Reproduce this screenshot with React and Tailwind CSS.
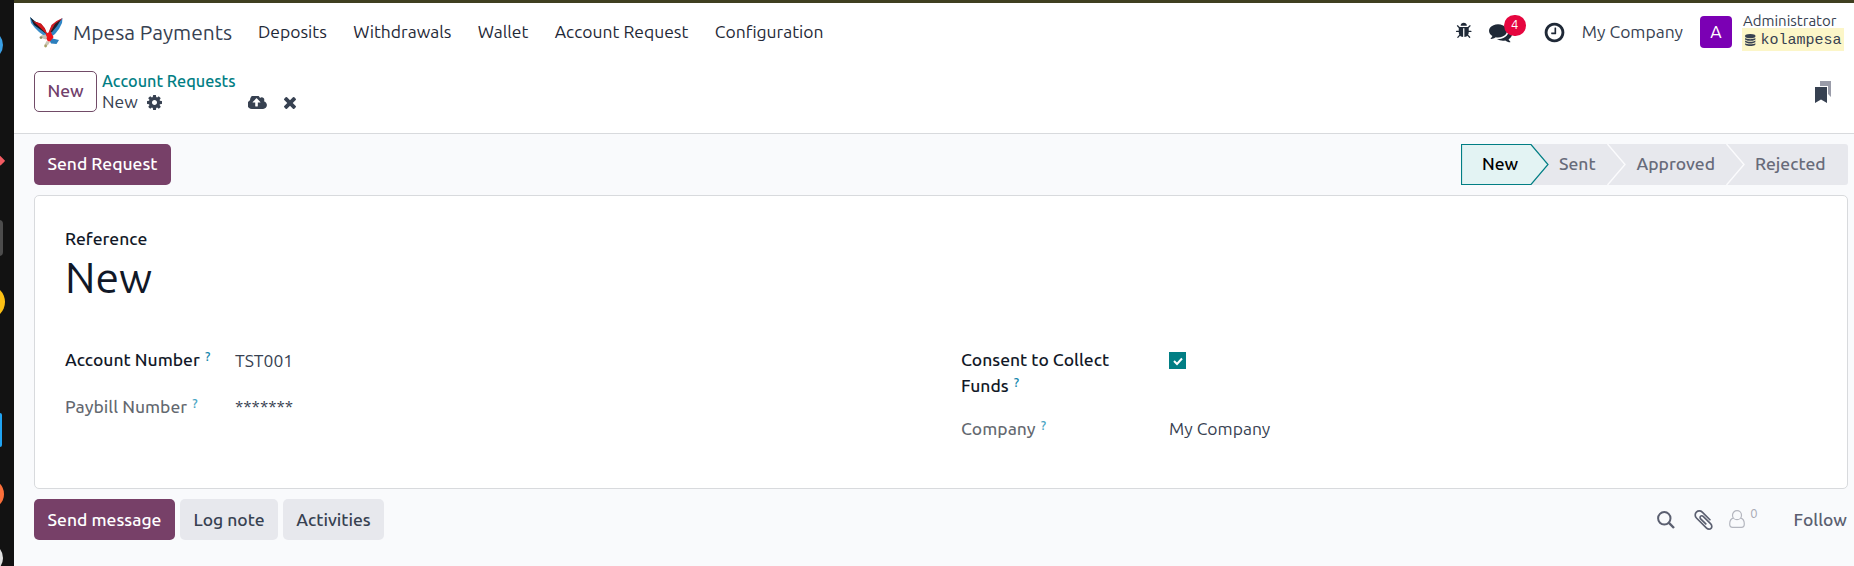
const ICONS = {
  bug: ["0 0 1792 1792", "M1696 960q0 26-19 45t-45 19h-224q0 171-67 290l208 209q19 19 19 45t-19 45q-18 19-45 19t-45-19l-198-197q-5 5-15 13t-42 28.5-65 36.5-82 29-97 13v-896h-128v896q-51 0-101.5-13.5t-87-33-66-39-43.5-32.5l-15-14-183 207q-20 21-48 21-24 0-43-16-19-18-20.5-44.5t15.5-46.5l202-227q-58-114-58-274h-224q-26 0-45-19t-19-45 19-45 45-19h224v-294l-173-173q-19-19-19-45t19-45 45-19 45 19l173 173h844l173-173q19-19 45-19t45 19 19 45-19 45l-173 173v294h224q26 0 45 19t19 45zm-480-576h-640q0-133 93.5-226.5t226.5-93.5 226.5 93.5 93.5 226.5z"],
  comments: ["0 0 1792 1792", "M1408 768q0 139-94 257t-256.5 186.5-353.5 68.5q-86 0-176-16-124 88-278 128-36 9-86 16h-3q-11 0-20.5-8t-11.5-21q-1-3-1-6.5t.5-6.5 2-6l2.5-5 3.5-5.5 4-5 4.5-5 4-4.5q5-6 23-25t26-29.5 22.5-29 25-38.5 20.5-44q-124-72-195-177t-71-224q0-139 94-257t256.5-186.5 353.5-68.5 353.5 68.5 256.5 186.5 94 257zm384 256q0 120-71 224.5t-195 176.5q10 24 20.5 44t25 38.5 22.5 29 26 29.5 23 25q1 1 4 4.5t4.5 5 4 5 3.5 5.5l2.5 5 2 6 .5 6.5-1 6.5q-3 14-13 22t-22 7q-50-7-86-16-154-40-278-128-90 16-176 16-271 0-472-132 58 4 88 4 161 0 309-45t264-129q125-92 192-212t67-254q0-77-23-152 129 71 204 178t75 230z"],
  clock: ["0 0 1792 1792", "M1024 544v448q0 14-9 23t-23 9h-320q-14 0-23-9t-9-23v-64q0-14 9-23t23-9h224v-352q0-14 9-23t23-9h64q14 0 23 9t9 23zm416 352q0-148-73-273t-198-198-273-73-273 73-198 198-73 273 73 273 198 198 273 73 273-73 198-198 73-273zm224 0q0 209-103 385.5t-279.5 279.5-385.5 103-385.5-103-279.5-279.5-103-385.5 103-385.5 279.5-279.5 385.5-103 385.5 103 279.5 279.5 103 385.5z"],
  database: ["128 0 1536 1792", "M896 768q237 0 443-43t325-127v170q0 69-103 128t-280 93.5-385 34.5-385-34.5-280-93.5-103-128v-170q119 84 325 127t443 43zm0 768q237 0 443-43t325-127v170q0 69-103 128t-280 93.5-385 34.5-385-34.5-280-93.5-103-128v-170q119 84 325 127t443 43zm0-384q237 0 443-43t325-127v170q0 69-103 128t-280 93.5-385 34.5-385-34.5-280-93.5-103-128v-170q119 84 325 127t443 43zm0-1152q208 0 385 34.5t280 93.5 103 128v128q0 69-103 128t-280 93.5-385 34.5-385-34.5-280-93.5-103-128v-128q0-69 103-128t280-93.5 385-34.5z"],
  cog: ["128 128 1536 1536", "M1152 896q0-106-75-181t-181-75-181 75-75 181 75 181 181 75 181-75 75-181zm512-109v222q0 12-8 23t-20 13l-185 28q-19 54-39 91 35 50 107 138 10 12 10 25t-9 23q-27 37-99 108t-94 71q-12 0-26-9l-138-108q-44 23-91 38-16 136-29 186-7 28-36 28h-222q-14 0-24.5-8.5t-11.5-21.5l-28-184q-49-16-90-37l-141 107q-10 9-25 9-14 0-25-11-126-114-165-168-7-10-7-23 0-12 8-23 15-21 51-66.5t54-70.5q-27-50-41-99l-183-27q-13-2-21-12.5t-8-23.5v-222q0-12 8-23t19-13l186-28q14-46 39-92-40-57-107-138-10-12-10-24 0-10 9-23 26-36 98.5-107.5t94.5-71.5q13 0 26 10l138 107q44-23 91-38 16-136 29-186 7-28 36-28h222q14 0 24.5 8.5t11.5 21.5l28 184q49 16 90 37l142-107q9-9 24-9 13 0 25 10 129 119 165 170 7 8 7 22 0 12-8 23-15 21-51 66.5t-54 70.5q26 50 41 98l183 28q13 2 21 12.5t8 23.5z"],
  upload: ["0 256 1856 1280", "M1216 864q0-14-9-23l-352-352q-9-9-23-9t-23 9l-351 351q-10 12-10 24 0 14 9 23t23 9h224v352q0 13 9.5 22.5t22.5 9.5h192q13 0 22.5-9.5t9.5-22.5v-352h224q13 0 22.5-9.5t9.5-22.5zm640 288q0 159-112.5 271.5t-271.5 112.5h-1088q-185 0-316.5-131.5t-131.5-316.5q0-130 70-240t188-165q-2-30-2-43 0-212 150-362t362-150q156 0 285.5 87t188.5 231q71-62 166-62 106 0 181 75t75 181q0 76-41 138 130 31 213.5 135.5t83.5 238.5z"],
  times: ["302 366 1188 1188", "M1490 1322q0 40-28 68l-136 136q-28 28-68 28t-68-28l-294-294-294 294q-28 28-68 28t-68-28l-136-136q-28-28-28-68t28-68l294-294-294-294q-28-28-28-68t28-68l136-136q28-28 68-28t68 28l294 294 294-294q28-28 68-28t68 28l136 136q28 28 28 68t-28 68l-294 294 294 294q28 28 28 68z"],
  clip: ["196 128 1400 1532", "M1596 1385q0 117-79 196t-196 79q-135 0-235-100l-777-776q-113-115-113-271 0-159 110-270t269-111q158 0 273 113l605 606q10 10 10 22 0 16-30.5 46.5t-46.5 30.5q-13 0-23-10l-606-607q-79-77-181-77-106 0-179 75t-73 181q0 105 76 181l776 777q63 63 145 63 64 0 106-42t42-106q0-82-63-145l-581-581q-26-24-60-24-29 0-48 19t-19 48q0 32 25 59l410 410q10 10 10 22 0 16-31 47t-47 31q-12 0-22-10l-410-410q-63-61-63-149 0-82 57-139t139-57q88 0 149 63l581 581q100 98 100 235z"],
};

function Icon({ name, className }) {
  const [viewBox, d] = ICONS[name];
  return (
    <svg viewBox={viewBox} className={`shrink-0 fill-current ${className}`}>
      <path d={d} />
    </svg>
  );
}

function EagleLogo() {
  return (
    <svg viewBox="0 0 34 34" className="h-[34px] w-[34px] shrink-0">
      <path d="M1 2 L2 8 L6 13 L10 17 L14 20 L18 22 L16 16 L8 8 Z" fill="#3a8cc8" />
      <path d="M33.5 3 L33 8 L30 14 L26 19 L22 22 L19 20 L23 10 Z" fill="#2f86c6" />
      <path d="M1 2 L6 6.5 L12 9 L15.5 13 L18.5 20 L12 15 L5 10 Z" fill="#171a26" />
      <path d="M4 6 L12 8.5 L16 13.5 L18.5 20 L12 13.5 Z" fill="#d3181d" />
      <path d="M33.5 3 L27.5 6 L22.5 10 L18.5 20 L22 18 L27 11 Z" fill="#cf1a20" />
      <path d="M32 4.5 L26 9 L21.5 17 L23 17 L28 11 Z" fill="#20202c" />
      <path d="M17 18 L22 17.5 L24.5 22 L22.5 26.5 L19 26.5 L17 23 Z" fill="#ee1319" />
      <path d="M23.5 23.5 L30 25 L27.5 29 L22 28.5 L21 26.5 Z" fill="#2c7fbd" />
      <path d="M12 20.5 L16.5 19.5 L18 22 L17 24.5 L13.5 23.5 Z" fill="#c5c0b8" />
      <path d="M17.5 26 L21 27 L19 30 L16.5 31.5 L15.5 30 Z" fill="#cbc6b5" />
      <circle cx="12" cy="22.6" r="1.4" fill="#8f8a62" />
      <circle cx="16.6" cy="31" r="1.4" fill="#a8a168" />
    </svg>
  );
}

function Dock() {
  return (
    <div className="relative w-[14px] shrink-0 overflow-hidden bg-[#121212]">
      <span className="absolute top-[30px] -left-[27px] h-[30px] w-[30px] rounded-full bg-[#3aa0e6]" />
      <span className="absolute top-[157px] -left-[4px] h-[7px] w-[8px] rotate-45 rounded-[1px] bg-[#f25b62]" />
      <span className="absolute top-[220px] -left-[10px] h-[36px] w-[13px] rounded-[4px] bg-[#4c4c4c]" />
      <span className="absolute top-[285px] -left-[29px] h-[34px] w-[34px] rounded-full bg-[#fcc014]" />
      <span className="absolute top-[413px] -left-[10px] h-[34px] w-[12px] rounded-[2px] bg-[#20a4f3]" />
      <span className="absolute top-[479px] -left-[26px] h-[30px] w-[30px] rounded-full bg-[#fb6f3a]" />
      <span className="absolute top-[543px] -left-[27px] h-[30px] w-[30px] rounded-full bg-[#dfdfdf]" />
    </div>
  );
}

function Navbar() {
  return (
    <header className="flex h-[58px] items-center pl-[15px] pr-[9px] text-[#374151]">
      <EagleLogo />
      <span className="ml-[10px] w-[185px] whitespace-nowrap pt-[1px] text-[21px]">Mpesa Payments</span>
      <nav className="flex flex-1 gap-[26.4px] whitespace-nowrap text-[17.5px] text-[#1f2937]">
        <a>Deposits</a>
        <a>Withdrawals</a>
        <a>Wallet</a>
        <a>Account Request</a>
        <a>Configuration</a>
      </nav>
      <Icon name="bug" className="mb-[2px] h-[17.5px] w-[17.5px] text-[#1f2937]" />
      <div className="relative ml-[16px] mr-[31px]">
        <Icon name="comments" className="h-[23px] w-[23px] text-[#1f2937]" />
        <span className="absolute -top-[6px] left-[15px] flex h-[21px] w-[22px] items-center justify-center rounded-full bg-[#e6063f] text-[13px] text-white">
          4
        </span>
      </div>
      <Icon name="clock" className="h-[23px] w-[23px] text-[#1f2937]" />
      <span className="ml-[16px] whitespace-nowrap text-[17.5px] text-[#374151]">My Company</span>
      <span className="ml-[17px] flex h-8 w-8 items-center justify-center rounded-[4px] bg-[#7b00b4] text-[17.5px] text-white">
        A
      </span>
      <div className="ml-[10px] flex w-[103px] flex-col whitespace-nowrap text-[15px] leading-[15px]">
        <span className="pl-[1px]">Administrator</span>
        <span className="mr-[1px] flex h-[23px] items-center bg-[#fcf6c8] pl-[3px] pt-[1px] font-['Liberation_Mono',monospace]">
          <Icon name="database" className="mr-[5px] h-[12px] w-[10.5px]" />
          kolampesa
        </span>
      </div>
    </header>
  );
}

function ControlPanel() {
  return (
    <div className="flex h-[73px] items-start border-b border-[#d8dadd] pl-5 pr-[23px] pt-[10px]">
      <button className="flex h-[41px] w-[63px] items-center justify-center rounded-[5px] border border-[#714b67] text-[17.5px] font-medium text-[#71406b]">
        New
      </button>
      <div className="ml-[5px] flex flex-col whitespace-nowrap text-[#374151]">
        <a className="h-[21px] text-[16.25px] leading-[21px] font-medium text-[#017e84]">Account Requests</a>
        <div className="flex h-5 items-center">
          <span className="w-[45px] text-[17.5px] leading-5">New</span>
          <Icon name="cog" className="h-[15px] w-[15px]" />
          <Icon name="upload" className="ml-[86px] h-[13px] w-[19px]" />
          <Icon name="times" className="ml-[17px] mt-[1px] h-[12px] w-[12px]" />
        </div>
      </div>
      <svg viewBox="0 0 16 22" className="ml-auto mt-[10px] h-[22px] w-4">
        <path d="M5 0h11v16l-3-3V5H5z" fill="#9a9ca9" />
        <path d="M0 6h12v16l-6-3.5L0 22z" fill="#374151" />
      </svg>
    </div>
  );
}

function Chevron() {
  return (
    <svg viewBox="0 0 19 41" className="absolute -right-[18px] top-0 h-[41px] w-[19px]" fill="none">
      <path d="M0.5 0 L18 20.5 L0.5 41" stroke="#fbfbfd" strokeWidth="1.4" />
    </svg>
  );
}

function StatusBar() {
  return (
    <div className="flex h-[41px] items-center rounded-[3px] bg-[#e7e8ed] text-[17.5px] font-medium text-[#676b7a]">
      <div className="relative flex h-full w-[70px] items-center pl-[21px] text-black">
        <svg viewBox="0 0 88 41" className="absolute left-0 top-0 h-[41px] w-[88px]">
          <path d="M0.5 0.5 H70 L87 20.5 L70 40.5 H0.5 Z" fill="#e3f3f3" stroke="#017e84" strokeWidth="1.2" />
        </svg>
        <span className="relative">New</span>
      </div>
      <div className="relative flex h-full w-[77px] items-center pl-[28px]">
        Sent
        <Chevron />
      </div>
      <div className="relative flex h-full w-[119px] items-center pl-[28.5px]">
        Approved
        <Chevron />
      </div>
      <div className="flex h-full w-[121px] items-center pl-[28px]">Rejected</div>
    </div>
  );
}

function Label({ children, muted, className = "" }) {
  return (
    <span className={`text-[17.5px] leading-[26px] font-medium ${muted ? "text-[#111827]/66" : "text-[#111827]"} ${className}`}>
      {children}{" "}
      <sup className={`-top-[5px] ml-[1px] text-[13px] leading-none font-medium ${muted ? "text-[#4aa5c4]" : "text-[#1487ad]"}`}>?</sup>
    </span>
  );
}

function Sheet() {
  return (
    <section className="mt-[10px] h-[294px] rounded-[5px] border border-[#d8dadd] bg-white px-[30px] pt-[30px]">
      <div className="h-[26px] text-[17.5px] leading-[26px] font-medium text-[#111827]">Reference</div>
      <h1 className="h-[50px] text-[42.7px] leading-[50px] text-[#111827]">New</h1>
      <div className="mt-[45px] grid grid-cols-[896px_1fr] text-[17.5px] leading-[26px] text-[#374151]">
        <div className="grid grid-cols-[170px_1fr] content-start gap-y-[20px]">
          <Label>Account Number</Label>
          <span className="pt-[1px]">TST001</span>
          <Label muted>Paybill Number</Label>
          <span>*******</span>
        </div>
        <div className="grid grid-cols-[208px_1fr] content-start gap-y-[17px]">
          <Label className="w-[170px]">Consent to Collect Funds</Label>
          <span className="mt-[5px] flex h-[17px] w-[17px] items-center justify-center bg-[#017e84]">
            <svg viewBox="0 0 10 10" className="h-[10px] w-[10px]" fill="none" stroke="white" strokeWidth="2">
              <path d="M1 5 L4 8 L9 2.5" />
            </svg>
          </span>
          <Label muted>Company</Label>
          <span>My Company</span>
        </div>
      </div>
    </section>
  );
}

function Chatter() {
  return (
    <div className="mt-[10px] flex h-[41px] items-center gap-[5px] whitespace-nowrap text-[17.5px] font-medium text-[#374151]">
      <button className="h-[41px] w-[141px] rounded-[5px] bg-[#774068] pt-[1px] text-white">Send message</button>
      <button className="h-[41px] w-[98px] rounded-[5px] bg-[#e7e8ed] pt-[1px]">Log note</button>
      <button className="h-[41px] w-[101px] rounded-[5px] bg-[#e7e8ed] pt-[1px]">Activities</button>
      <div className="ml-auto mr-[1px] flex items-center pt-[1px] text-[#5b5f70]">
        <svg viewBox="0 0 18 18" className="h-[18px] w-[18px]" fill="none" stroke="currentColor" strokeWidth="2">
          <circle cx="7.3" cy="7.3" r="6.2" />
          <path d="M11.7 11.7 L17 17" strokeWidth="2.4" />
        </svg>
        <Icon name="clip" className="ml-[19px] h-[20px] w-[19px]" />
        <svg viewBox="0 0 16 18" className="ml-[16px] mb-[2px] h-[18px] w-4" fill="none" stroke="#b4b6bf" strokeWidth="1.2">
          <circle cx="8" cy="5.2" r="4.5" />
          <path d="M4.4 8.2 C1.8 8.8 0.7 11 0.7 14 C0.7 16.2 1.8 17.3 3.5 17.3 H12.5 C14.2 17.3 15.3 16.2 15.3 14 C15.3 11 14.2 8.8 11.6 8.2" />
        </svg>
        <span className="mb-[14px] ml-[5px] text-[13px] leading-none font-normal text-[#a9abb5]">0</span>
        <span className="ml-[36px]">Follow</span>
      </div>
    </div>
  );
}

export default function App() {
  return (
    <div className="flex h-[566px] w-[1854px] overflow-hidden bg-[#121212] font-[Ubuntu,'Noto_Sans',sans-serif]">
      <Dock />
      <div className="flex flex-1 flex-col border-t-[3px] border-[#3f3f20] bg-white">
        <Navbar />
        <ControlPanel />
        <main className="flex-1 bg-[#f9fafc] pl-5 pr-[6px] pt-[10px]">
          <div className="flex justify-between">
            <button className="h-[41px] w-[137px] rounded-[5px] bg-[#774068] text-[17.5px] font-medium text-white">
              Send Request
            </button>
            <StatusBar />
          </div>
          <Sheet />
          <Chatter />
        </main>
      </div>
    </div>
  );
}
